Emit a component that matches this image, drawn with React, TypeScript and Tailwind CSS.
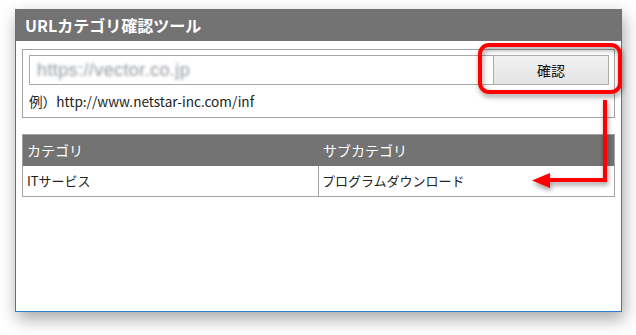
import React from "react";

const jp = { fontFamily: '"Noto Sans CJK JP", "Noto Sans", sans-serif' };

export default function App() {
  return (
    <div className="relative w-[636px] h-[335px] bg-white overflow-hidden" style={jp}>
      <div className="absolute left-[15px] top-[9px] w-[607px] h-[303px] flex flex-col bg-white border-x border-b border-[#2b7cd3] shadow-[2px_7px_16px_rgba(0,0,0,0.35)]">
        <div className="h-[32px] bg-[#737373] flex items-center pl-[9px] text-white text-[16px] font-bold leading-none">
          URLカテゴリ確認ツール
        </div>
        <div className="px-[6px] pt-[8px] flex flex-col">
          <div className="border border-[#a3a3a3] h-[69px] pl-[6px] pr-[5px] pt-[5px] flex flex-col">
            <div className="flex h-[30px]">
              <div className="flex-1 border border-[#a9a9a9] border-r-0 flex items-center pl-[7px] text-[18px] tracking-[0.4px] text-[#8f959c]">
                <span className="blur-[1.4px]" style={{ fontFamily: '"Liberation Sans", sans-serif' }}>https://vector.co.jp</span>
              </div>
              <div className="w-[116px] border border-[#acacac] bg-gradient-to-b from-[#f2f2f2] to-[#e4e4e4] flex items-center justify-center text-[14px] text-[#111]">
                確認
              </div>
            </div>
            <div className="mt-[6px] text-[13.6px] text-[#222] leading-[20px]">例）http://www.netstar-inc.com/inf</div>
          </div>
          <div className="mt-[16px] border border-[#a3a3a3] flex flex-col">
            <div className="flex h-[31px] bg-[#737373] text-white text-[14px] items-center">
              <div className="w-[296px] pl-[4px]">カテゴリ</div>
              <div className="flex-1 pl-[4px]">サブカテゴリ</div>
            </div>
            <div className="flex h-[30px] text-[13px] text-[#222] items-center">
              <div className="w-[296px] h-full flex items-center pl-[4px] border-r border-[#a3a3a3]">ITサービス</div>
              <div className="flex-1 pl-[3px]">プログラムダウンロード</div>
            </div>
          </div>
        </div>
      </div>
      <svg className="absolute left-0 top-0" width="636" height="335" viewBox="0 0 636 335">
        <defs>
          <filter id="sh" x="-20%" y="-20%" width="140%" height="160%">
            <feDropShadow dx="1" dy="3" stdDeviation="2.5" floodColor="#000" floodOpacity="0.4" />
          </filter>
        </defs>
        <g filter="url(#sh)">
          <rect x="480" y="45" width="140" height="47" rx="9" fill="none" stroke="#ff0000" strokeWidth="4" />
          <path d="M605 100 V180 H546" fill="none" stroke="#ff0000" strokeWidth="4" />
          <path d="M532 180.5 L550 173 L550 188 Z" fill="#ff0000" />
        </g>
      </svg>
    </div>
  );
}
